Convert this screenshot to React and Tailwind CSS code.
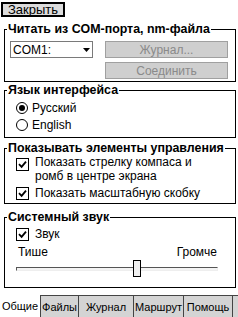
import { useState } from 'react';

function Check() {
    return (
        <span className="w-[13px] h-[13px] border border-black bg-white flex items-center justify-center shrink-0">
            <svg width="9" height="9" viewBox="0 0 9 9">
                <path d="M1 4.2 L3.6 6.8 L8 1.6" fill="none" stroke="black" strokeWidth="1.8" />
            </svg>
        </span>
    );
}

function Radio({ on }) {
    return (
        <span className="w-[12px] h-[12px] rounded-full border border-black bg-white flex items-center justify-center shrink-0">
            {on && <span className="w-[6px] h-[6px] rounded-full bg-black" />}
        </span>
    );
}

function Group({ title, className, children }) {
    return (
        <fieldset className={`mx-[4px] w-[232px] shrink-0 border border-black ${className}`}>
            <legend className="ml-[2px] px-[1px] font-bold text-[12.4px] leading-[14px]">{title}</legend>
            {children}
        </fieldset>
    );
}

export default function App() {
    const [lang, setLang] = useState('ru');
    const tabs = [
        { name: 'Файлы', w: 'w-[38px]' },
        { name: 'Журнал', w: 'w-[55px]' },
        { name: 'Маршрут', w: 'w-[50px]' },
        { name: 'Помощь', w: 'w-[49px]' },
    ];

    return (
        <div className="w-[238px] h-[317px] bg-white text-black font-['Liberation_Sans',Arial,sans-serif] text-[12px] leading-[14px] flex flex-col overflow-hidden">
            <div className="pt-[2px] pl-[1px] h-[17px]">
                <button className="h-[15px] w-[64px] border-2 border-black bg-[#dcdcdc] text-[13px] leading-[11px] flex items-center justify-center">
                    Закрыть
                </button>
            </div>

            <Group title="Читать из COM-порта, nm-файла" className="mt-[5px] h-[60px]">
                <div className="flex pt-[5px] pl-[5px]">
                    <div className="w-[83px] h-[17px] border border-[#7a7a7a] bg-white flex items-center justify-between pl-[2px] pr-[2px]">
                        <span>COM1:</span>
                        <svg width="7" height="4" viewBox="0 0 7 4"><path d="M0 0 H7 L3.5 4 Z" fill="black" /></svg>
                    </div>
                    <div className="ml-[12px] flex flex-col gap-[4px]">
                        <button className="w-[123px] h-[17px] border border-[#a0a0a0] bg-[#cfcfcf] text-[#8a8a8a] flex items-center justify-center">Журнал...</button>
                        <button className="w-[123px] h-[17px] border border-[#a0a0a0] bg-[#cfcfcf] text-[#8a8a8a] flex items-center justify-center">Соединить</button>
                    </div>
                </div>
            </Group>

            <Group title="Язык интерфейса" className="mt-[1px] h-[55px]">
                <div className="pt-[3px] pl-[11px] flex flex-col gap-[1px]">
                    <label onClick={() => setLang('ru')} className="h-[16px] flex items-center gap-[4px]">
                        <Radio on={lang === 'ru'} />
                        <span>Русский</span>
                    </label>
                    <label onClick={() => setLang('en')} className="h-[16px] flex items-center gap-[4px]">
                        <Radio on={lang === 'en'} />
                        <span>English</span>
                    </label>
                </div>
            </Group>

            <Group title="Показывать элементы управления" className="mt-[3px] h-[63px]">
                <div className="pl-[11px]">
                    <div className="flex items-start">
                        <span className="mt-[3px]"><Check /></span>
                        <span className="ml-[6px]">Показать стрелку компаса и<br />ромб в центре экрана</span>
                    </div>
                    <div className="mt-[3px] flex items-center">
                        <Check />
                        <span className="ml-[6px]">Показать масштабную скобку</span>
                    </div>
                </div>
            </Group>

            <Group title="Системный звук" className="mt-[6px] h-[78px]">
                <div className="pt-[3px] pl-[11px] flex items-center">
                    <Check />
                    <span className="ml-[6px]">Звук</span>
                </div>
                <div className="mt-[4px] pl-[13px] pr-[18px] flex justify-between">
                    <span>Тише</span>
                    <span>Громче</span>
                </div>
                <div className="relative mt-[1px] ml-[11px] w-[202px] h-[17px] flex items-center">
                    <div className="w-full h-[4px] border-t border-l border-[#555] border-b border-r border-b-[#eee] border-r-[#eee] bg-[#f4f4f4]" />
                    <div className="absolute left-[117px] top-0 w-[8px] h-[17px] border border-black bg-[#f0f0f0]" />
                </div>
            </Group>

            <div className="mt-[7px] h-[22px] flex text-[11px]">
                <div className="w-[40px] flex items-center justify-center bg-white">Общие</div>
                {tabs.map((t) => (
                    <div key={t.name} className={`${t.w} border-l border-t border-[#444] bg-[#d4d4d4] flex items-center justify-center`}>
                        {t.name}
                    </div>
                ))}
                <div className="flex-1 border-l border-t border-[#444] bg-[#d4d4d4]" />
            </div>
        </div>
    );
}
